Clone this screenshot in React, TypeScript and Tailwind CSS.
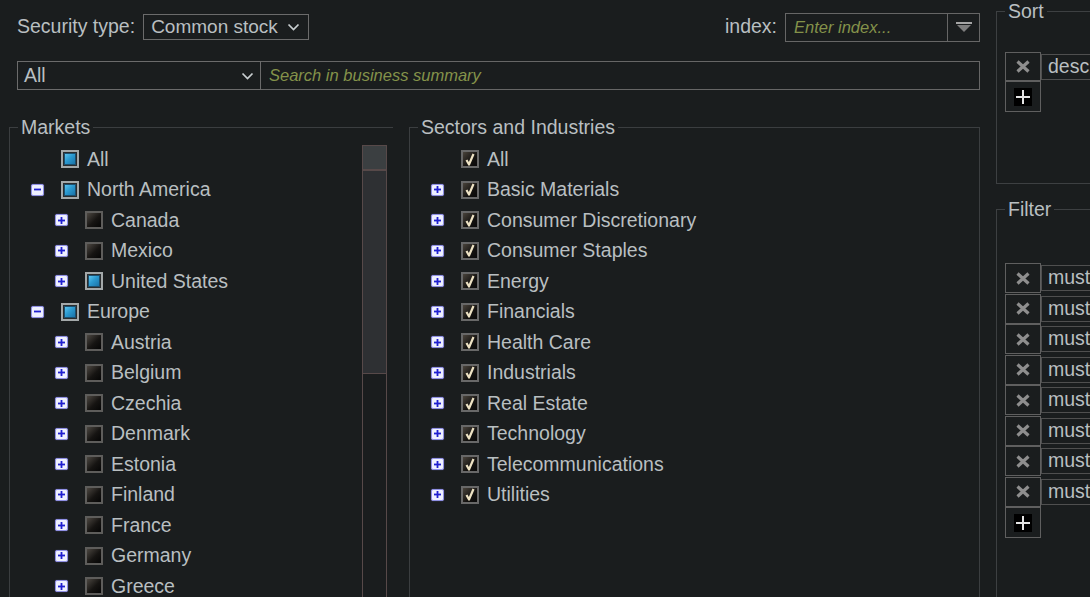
import React from 'react'

type CheckState = 'checked' | 'unchecked' | 'partial'
type Expander = 'plus' | 'minus' | null

type TreeItem = {
  label: string
  level: 0 | 1
  expander: Expander
  state: CheckState
}

const markets: TreeItem[] = [
  { label: 'All', level: 0, expander: null, state: 'partial' },
  { label: 'North America', level: 0, expander: 'minus', state: 'partial' },
  { label: 'Canada', level: 1, expander: 'plus', state: 'unchecked' },
  { label: 'Mexico', level: 1, expander: 'plus', state: 'unchecked' },
  { label: 'United States', level: 1, expander: 'plus', state: 'partial' },
  { label: 'Europe', level: 0, expander: 'minus', state: 'partial' },
  { label: 'Austria', level: 1, expander: 'plus', state: 'unchecked' },
  { label: 'Belgium', level: 1, expander: 'plus', state: 'unchecked' },
  { label: 'Czechia', level: 1, expander: 'plus', state: 'unchecked' },
  { label: 'Denmark', level: 1, expander: 'plus', state: 'unchecked' },
  { label: 'Estonia', level: 1, expander: 'plus', state: 'unchecked' },
  { label: 'Finland', level: 1, expander: 'plus', state: 'unchecked' },
  { label: 'France', level: 1, expander: 'plus', state: 'unchecked' },
  { label: 'Germany', level: 1, expander: 'plus', state: 'unchecked' },
  { label: 'Greece', level: 1, expander: 'plus', state: 'unchecked' },
  { label: 'Hungary', level: 1, expander: 'plus', state: 'unchecked' },
  { label: 'Ireland', level: 1, expander: 'plus', state: 'unchecked' },
]

const sectors: TreeItem[] = [
  { label: 'All', level: 0, expander: null, state: 'checked' },
  ...[
    'Basic Materials',
    'Consumer Discretionary',
    'Consumer Staples',
    'Energy',
    'Financials',
    'Health Care',
    'Industrials',
    'Real Estate',
    'Technology',
    'Telecommunications',
    'Utilities',
  ].map((label) => ({ label, level: 0 as const, expander: 'plus' as Expander, state: 'checked' as CheckState })),
]

const levelPad = { 0: 'pl-[21px]', 1: 'pl-[45px]' }

function Chevron() {
  return (
    <svg width="13" height="8" viewBox="0 0 13 8" className="shrink-0">
      <polyline points="1.5,1.5 6.5,6.5 11.5,1.5" fill="none" stroke="#c9cfd1" strokeWidth="1.7" />
    </svg>
  )
}

function ExpanderBox({ kind }: { kind: Expander }) {
  if (!kind) return null
  return (
    <div className="flex h-[12px] w-[13px] items-center justify-center rounded-[2px] border border-[#8f8fe3] bg-[#eef0ff] shadow-[0_0_1px_#7070c0]">
      <svg width="9" height="9" viewBox="0 0 9 9">
        <rect x="1" y="3.6" width="7" height="1.8" fill="#1f1fd0" />
        {kind === 'plus' && <rect x="3.6" y="1" width="1.8" height="7" fill="#1f1fd0" />}
      </svg>
    </div>
  )
}

function CheckBox({ state }: { state: CheckState }) {
  if (state === 'partial') {
    return (
      <div className="flex h-[18px] w-[18px] shrink-0 items-center justify-center border-2 border-[#a3a8a9] bg-[#2a2d2e]">
        <div className="h-[12px] w-[12px] border border-[#1c4f6e] bg-[linear-gradient(135deg,#5cc4ee_0%,#2b9ad0_45%,#1a73a8_100%)]" />
      </div>
    )
  }
  if (state === 'checked') {
    return (
      <div className="flex h-[18px] w-[18px] shrink-0 items-center justify-center border-2 border-[#686868] bg-[linear-gradient(135deg,#4a443c_0%,#141210_60%,#0a0a0a_100%)]">
        <svg width="12" height="13" viewBox="0 0 12 13">
          <path d="M2.5 7 L5 11.5 L9.5 1" fill="none" stroke="#eee3c4" strokeWidth="2.2" strokeLinejoin="round" />
        </svg>
      </div>
    )
  }
  return (
    <div className="h-[18px] w-[18px] shrink-0 border-2 border-[#5e5d5b] bg-[linear-gradient(135deg,#4c4741_0%,#161412_55%,#050505_100%)]" />
  )
}

function TreeRow({ item }: { item: TreeItem }) {
  return (
    <div className={`flex h-[30.5px] items-center ${levelPad[item.level]}`}>
      <div className="flex w-[30px] shrink-0 items-center">
        <ExpanderBox kind={item.expander} />
      </div>
      <CheckBox state={item.state} />
      <span className="ml-[8px] whitespace-nowrap text-[19.5px] leading-none">{item.label}</span>
    </div>
  )
}

function XIcon() {
  return (
    <svg width="14" height="13" viewBox="0 0 14 13">
      <path d="M1.5 1.5 L12.5 11.5 M12.5 1.5 L1.5 11.5" stroke="#8e8e8e" strokeWidth="3.2" />
    </svg>
  )
}

function PlusButton() {
  return (
    <div className="flex h-[31px] w-[36px] items-center justify-center border border-[#5f5f5f]">
      <div className="flex h-[18px] w-[18px] items-center justify-center bg-black">
        <svg width="16" height="16" viewBox="0 0 16 16">
          <rect x="1" y="7" width="14" height="2" fill="#e4e4e4" />
          <rect x="7" y="1" width="2" height="14" fill="#e4e4e4" />
        </svg>
      </div>
    </div>
  )
}

function RuleRow({ text }: { text: string }) {
  return (
    <div className="flex h-[30.5px] items-start">
      <div className="flex h-[30px] w-[36px] shrink-0 items-center justify-center border border-[#5f5f5f]">
        <XIcon />
      </div>
      <div className="mt-[2px] flex h-[26px] w-[90px] items-center border border-[#4f4f4f] pl-[6px] text-[19.5px]">
        {text}
      </div>
    </div>
  )
}

export default function App() {
  return (
    <div className="flex h-[597px] w-[1090px] overflow-hidden bg-[#1a1d1e] font-['Liberation_Sans',Arial,sans-serif] text-[#b9bfc1]">
      {/* left side: filters and trees */}
      <div className="w-[996px] shrink-0 pl-[9px] pr-[16px]">
        <div className="mt-[12px] flex h-[30px] items-center pl-[8px]">
          <span className="text-[19.5px]">Security type:</span>
          <div className="ml-[8px] flex h-[26px] w-[166px] items-center justify-between border border-[#6b6b6b] pl-[7px] pr-[8px] text-[19px]">
            <span>Common stock</span>
            <Chevron />
          </div>
          <div className="flex-1" />
          <span className="text-[19.5px]">index:</span>
          <input
            className="ml-[8px] h-[29px] w-[163px] border border-[#666] bg-transparent pl-[8px] text-[16.5px] outline-none placeholder:italic placeholder:text-[#84924a]"
            placeholder="Enter index..."
          />
          <div className="flex h-[29px] w-[32px] items-center justify-center border border-l-0 border-[#666]">
            <svg width="16" height="11" viewBox="0 0 16 11">
              <rect x="0" y="0" width="16" height="2" fill="#a5a5a5" />
              <path d="M1 3 L15 3 L8 10 Z" fill="#7d7d7d" />
            </svg>
          </div>
        </div>

        <div className="mt-[19px] flex h-[29px] pl-[8px]">
          <div className="flex w-[244px] items-center justify-between border border-[#6b6b6b] pl-[6px] pr-[6px] text-[19.5px]">
            <span>All</span>
            <Chevron />
          </div>
          <input
            className="h-[29px] flex-1 border border-l-0 border-[#666] bg-transparent pl-[8px] text-[16.5px] outline-none placeholder:italic placeholder:text-[#84924a]"
            placeholder="Search in business summary"
          />
        </div>

        <div className="mt-[26px] flex gap-[16px]">
          <fieldset className="h-[520px] w-[384px] shrink-0 border border-r-0 border-[#3b3e40]">
            <legend className="ml-[8px] px-[3px] text-[19.5px] leading-[22px]">Markets</legend>
            <div className="flex h-full pt-[6px]">
              <div className="flex-1">
                {markets.map((m) => (
                  <TreeRow key={m.label} item={m} />
                ))}
              </div>
              <div className="mr-[6px] mt-[1px] flex w-[25px] flex-col border border-[#574949]">
                <div className="h-[25px] border-b-2 border-[#574949] bg-[#3b3f41]" />
                <div className="h-[203px] border-b border-[#574949] bg-[#2e3033]" />
                <div className="flex-1" />
              </div>
            </div>
          </fieldset>

          <fieldset className="h-[520px] flex-1 border border-[#3b3e40]">
            <legend className="ml-[8px] px-[3px] text-[19.5px] leading-[22px]">Sectors and Industries</legend>
            <div className="pt-[6px]">
              {sectors.map((s) => (
                <TreeRow key={s.label} item={s} />
              ))}
            </div>
          </fieldset>
        </div>
      </div>

      {/* right side: sort and filter rules */}
      <div className="min-w-0 flex-1">
        <fieldset className="h-[184px] w-[160px] border border-[#3d4042] pl-[8px]">
          <legend className="ml-0 px-[3px] text-[19.5px] leading-[22px]">Sort</legend>
          <div className="pt-[30px]">
            <div className="flex h-[29px] items-center">
              <div className="flex h-[29px] w-[36px] shrink-0 items-center justify-center border border-[#5f5f5f]">
                <XIcon />
              </div>
              <div className="flex h-[26px] w-[90px] items-center border border-[#4f4f4f] pl-[6px] text-[19.5px]">desc</div>
            </div>
            <PlusButton />
          </div>
        </fieldset>

        <fieldset className="mt-[14px] h-[420px] w-[160px] border border-[#3d4042] pl-[8px]">
          <legend className="ml-0 px-[3px] text-[19.5px] leading-[22px]">Filter</legend>
          <div className="pt-[43px]">
            {Array.from({ length: 8 }).map((_, i) => (
              <RuleRow key={i} text="must" />
            ))}
            <PlusButton />
          </div>
        </fieldset>
      </div>
    </div>
  )
}
